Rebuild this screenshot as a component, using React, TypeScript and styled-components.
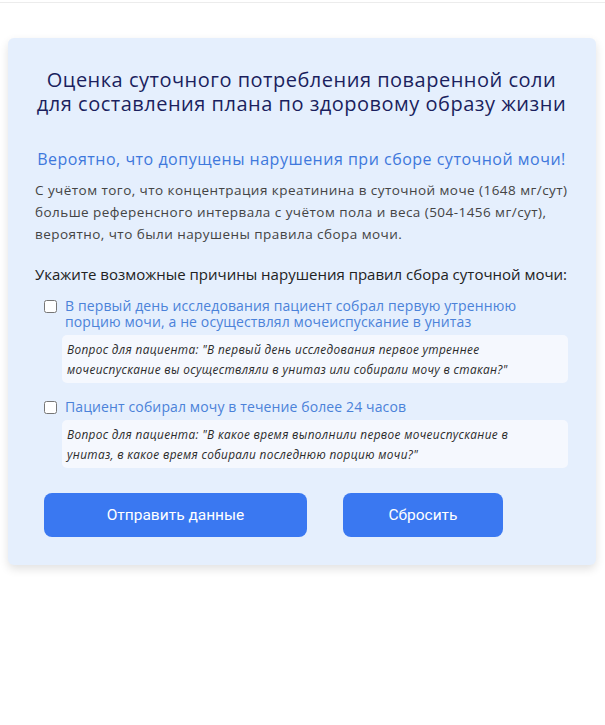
import styled, { createGlobalStyle } from "styled-components"
import { useState } from "react"

const GlobalStyle = createGlobalStyle`
  html, body {
    margin: 0;
    padding: 0;
    background: #fff;
  }
  body {
    font-family: "Open Sans", "Noto Sans", sans-serif;
  }
`

const TopRule = styled.div`
  height: 2px;
  border-bottom: 1px solid #ececec;
`

const Page = styled.div`
  padding: 35px 9px 40px 8px;
`

const Card = styled.div`
  background-color: #e5effd;
  border-radius: 6px;
  box-shadow: 0 4px 10px rgba(0, 0, 0, 0.12);
  padding: 30px 28px 28px 27px;
`

const Title = styled.h1`
  margin: 0;
  text-align: center;
  font-size: 20px;
  line-height: 24px;
  font-weight: 400;
  letter-spacing: 0.5px;
  color: #1b1f5e;
`

const Warning = styled.h2`
  margin: 32px 0 0;
  text-align: center;
  font-size: 16px;
  line-height: 22px;
  font-weight: 500;
  letter-spacing: 0.5px;
  color: #3e78dc;
`

const Text = styled.p`
  margin: 9px 0 0;
  font-size: 13.5px;
  line-height: 22px;
  letter-spacing: 0.45px;
  color: #444;
`

const Question = styled.h3`
  margin: 18px 0 0;
  font-size: 15px;
  line-height: 22px;
  font-weight: 500;
  color: #222;
`

const Options = styled.div`
  display: flex;
  flex-direction: column;
  gap: 16px;
  margin-top: 13px;
`

const Option = styled.div`
  display: flex;
  flex-direction: column;
`

const OptionLabel = styled.label`
  display: flex;
  align-items: flex-start;
  gap: 8px;
  padding-left: 9px;
  font-size: 14px;
  line-height: 16px;
  letter-spacing: 0.12px;
  color: #4b82d9;
  cursor: pointer;
`

const Check = styled.input`
  margin: 2px 0 0;
  width: 13px;
  height: 13px;
  flex-shrink: 0;
`

const Note = styled.div`
  margin: 5px 0 0 27px;
  padding: 4px 16px 4px 5px;
  background-color: #f5f8fe;
  border-radius: 5px;
  font-size: 11.8px;
  line-height: 20px;
  letter-spacing: 0.35px;
  font-style: italic;
  color: #2b2b2b;
`

const Buttons = styled.div`
  display: flex;
  gap: 36px;
  margin-top: 25px;
  padding-left: 9px;
`

const Button = styled.button<{ $width: number }>`
  width: ${(p) => p.$width}px;
  height: 44px;
  border: none;
  border-radius: 8px;
  background-color: #3a78f1;
  color: #fff;
  font-family: Roboto, "Liberation Sans", sans-serif;
  font-size: 15.5px;
  cursor: pointer;
`

const options = [
  {
    label:
      "В первый день исследования пациент собрал первую утреннюю порцию мочи, а не осуществлял мочеиспускание в унитаз",
    note:
      'Вопрос для пациента: "В первый день исследования первое утреннее мочеиспускание вы осуществляли в унитаз или собирали мочу в стакан?"',
  },
  {
    label: "Пациент собирал мочу в течение более 24 часов",
    note:
      'Вопрос для пациента: "В какое время выполнили первое мочеиспускание в унитаз, в какое время собирали последнюю порцию мочи?"',
  },
]

const App = () => {
  const [checked, setChecked] = useState<boolean[]>([false, false])

  const toggle = (i: number) => {
    setChecked(checked.map((c, j) => (j === i ? !c : c)))
  }

  return (
    <>
      <GlobalStyle />
      <TopRule />
      <Page>
        <Card>
          <Title>
            Оценка суточного потребления поваренной соли
            <br />
            для составления плана по здоровому образу жизни
          </Title>
          <Warning>Вероятно, что допущены нарушения при сборе суточной мочи!</Warning>
          <Text>
            С учётом того, что концентрация креатинина в суточной моче (1648 мг/сут)
            больше референсного интервала с учётом пола и веса (504-1456 мг/сут),
            вероятно, что были нарушены правила сбора мочи.
          </Text>
          <Question>Укажите возможные причины нарушения правил сбора суточной мочи:</Question>
          <Options>
            {options.map((o, i) => (
              <Option key={i}>
                <OptionLabel>
                  <Check type="checkbox" checked={checked[i]} onChange={() => toggle(i)} />
                  <span>{o.label}</span>
                </OptionLabel>
                <Note>{o.note}</Note>
              </Option>
            ))}
          </Options>
          <Buttons>
            <Button $width={263}>Отправить данные</Button>
            <Button $width={160} onClick={() => setChecked([false, false])}>Сбросить</Button>
          </Buttons>
        </Card>
      </Page>
    </>
  )
}

export default App
